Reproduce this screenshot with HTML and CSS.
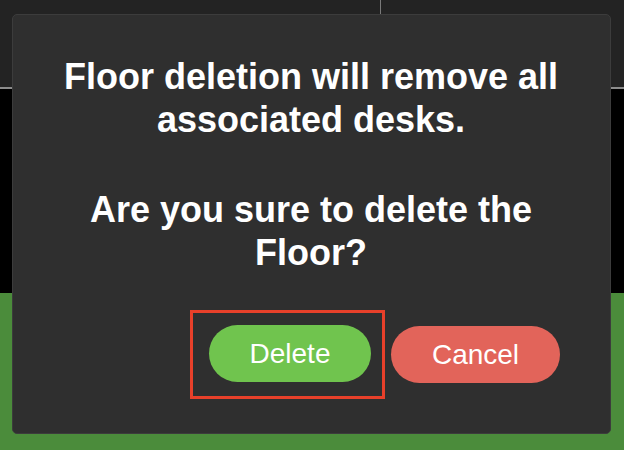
FILE: index.html
```html
<!DOCTYPE html>
<html>
<head>
<meta charset="utf-8">
<link rel="stylesheet" href="styles.css">
</head>
<body>
<div class="page">
  <div class="topbar">
    <div class="panel panel-left"></div>
    <div class="panel panel-right"></div>
  </div>
  <div class="canvas"></div>
  <div class="floor"></div>
</div>
<div class="dialog">
  <p class="msg">Floor deletion will remove all associated desks.</p>
  <p class="msg msg-q">Are you sure to delete the Floor?</p>
  <div class="actions">
    <div class="highlight">
      <button class="btn btn-delete">Delete</button>
    </div>
    <button class="btn btn-cancel">Cancel</button>
  </div>
</div>
</body>
</html>
```

FILE: styles.css
```css
* { box-sizing: border-box; }
html, body { margin: 0; padding: 0; }
body {
  width: 624px;
  height: 450px;
  overflow: hidden;
  position: relative;
  background: #4b8c3b;
  font-family: "Liberation Sans", Arial, sans-serif;
}
.page {
  display: flex;
  flex-direction: column;
  height: 450px;
}
.topbar {
  display: flex;
  height: 89px;
  background: #232323;
  border-bottom: 2px solid #8c8c8c;
}
.panel-left {
  width: 381px;
  border-right: 1px solid #7a7a7a;
}
.panel-right { flex: 1; }
.canvas {
  height: 204px;
  background: #000;
}
.floor {
  flex: 1;
  background: #4b8c3b;
}
.dialog {
  position: absolute;
  left: 12px;
  top: 14px;
  width: 599px;
  height: 420px;
  background: #2f2f2f;
  border: 1px solid #3c3c3c;
  border-radius: 5px;
  padding: 40px 50px 0 49px;
  color: #fff;
}
.msg {
  margin: 0 auto;
  max-width: 510px;
  font-size: 36px;
  font-weight: bold;
  line-height: 43px;
  text-align: center;
}
.msg-q { margin-top: 47px; }
.actions {
  display: flex;
  justify-content: flex-end;
  align-items: center;
  margin-top: 36px;
}
.highlight {
  border: 3px solid #e8402a;
  padding: 12px 11px 14px 16px;
  margin-right: 6px;
}
.btn {
  border: none;
  height: 57px;
  border-radius: 29px;
  padding: 0 40px;
  font-family: "Liberation Sans", Arial, sans-serif;
  font-size: 28px;
  color: #fff;
  display: block;
}
.btn-delete {
  width: 162px;
  background: #70c44e;
}
.btn-cancel {
  width: 169px;
  background: #e2645a;
}
```
